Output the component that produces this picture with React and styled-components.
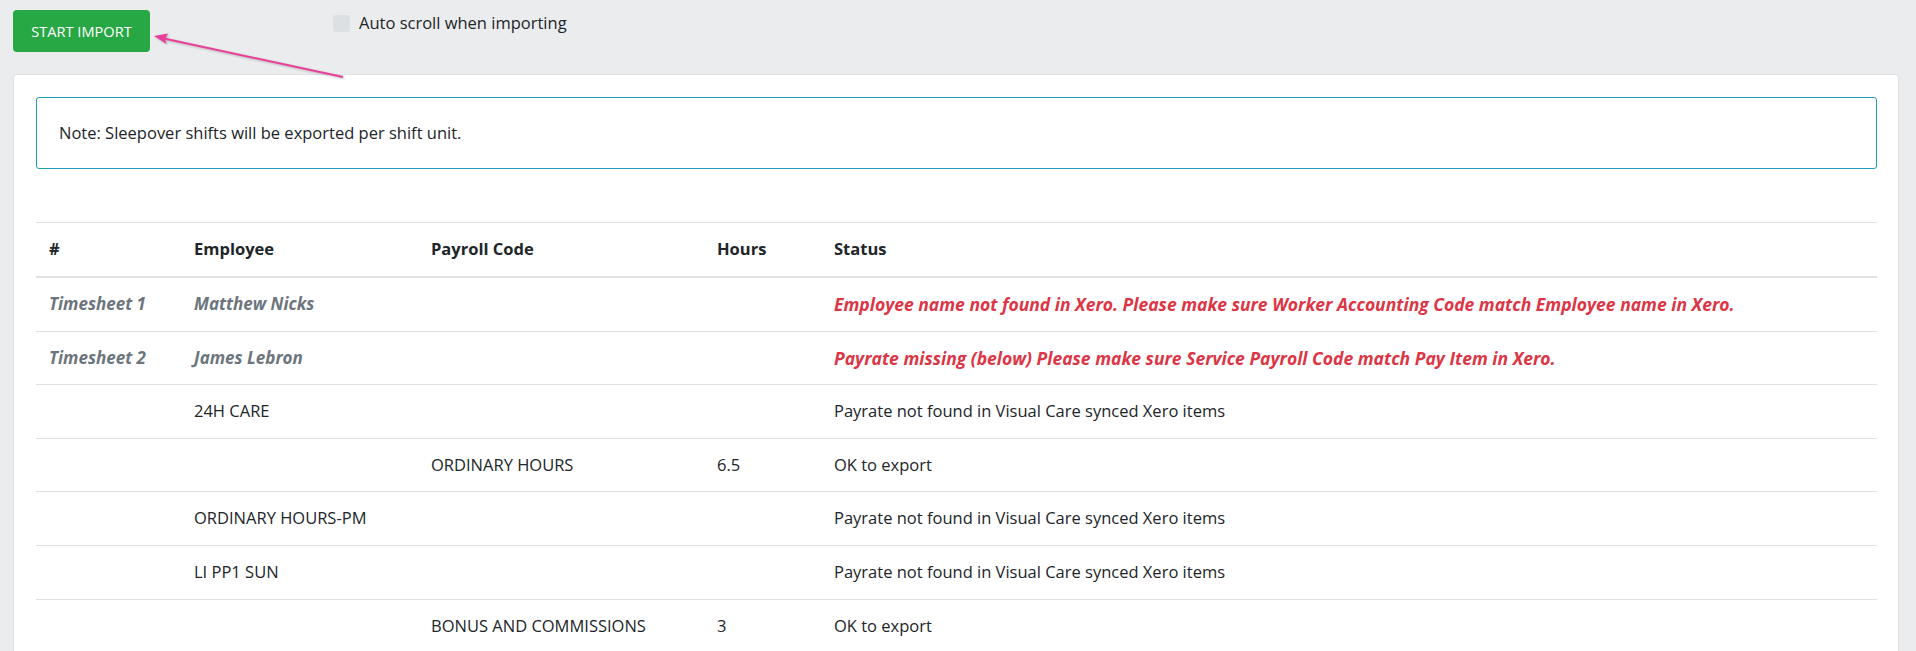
import React from "react";
import styled, { createGlobalStyle } from "styled-components";

const GlobalStyle = createGlobalStyle`
    html, body {
        margin: 0;
        padding: 0;
        background-color: #ebecee;
        font-family: "Open Sans", "Noto Sans", sans-serif;
        color: #212529;
        overflow: hidden;
    }
`;

const Page = styled.div`
    position: relative;
    box-sizing: border-box;
    width: 1916px;
    height: 651px;
    padding: 10px 17px 0 13px;
`;

const Toolbar = styled.div`
    display: flex;
    align-items: flex-start;
    height: 42px;
`;

const ImportButton = styled.button`
    box-sizing: border-box;
    width: 137px;
    height: 42px;
    border: none;
    border-radius: 4px;
    background-color: #28a745;
    color: #ffffff;
    font-family: "Open Sans", sans-serif;
    font-size: 14.6px;
    text-transform: uppercase;
    cursor: pointer;
`;

const CheckLabel = styled.label`
    display: flex;
    align-items: center;
    gap: 9px;
    margin-left: 183px;
    margin-top: 1px;
    font-size: 16.5px;
    line-height: 24px;
    color: #212529;
`;

const CheckBox = styled.span`
    display: inline-block;
    width: 17px;
    height: 17px;
    border-radius: 3px;
    background-color: #dcdfe4;
`;

const Arrow = styled.svg`
    position: absolute;
    left: 0;
    top: 0;
    pointer-events: none;
    overflow: visible;
    filter: drop-shadow(1px 1px 1px rgba(0, 0, 0, 0.25));
`;

const Card = styled.div`
    box-sizing: border-box;
    margin-top: 22px;
    height: 600px;
    background-color: #ffffff;
    border: 1px solid #dfe1e5;
    border-radius: 4px;
    padding: 22px 21px 0 22px;
`;

const Note = styled.div`
    border: 1px solid #1f9db7;
    border-radius: 3px;
    padding: 23px 22px;
    font-size: 16.5px;
    line-height: 24px;
`;

const Table = styled.table`
    width: 100%;
    margin-top: 53px;
    border-collapse: collapse;
    table-layout: fixed;
    font-size: 16.5px;
    line-height: 24px;
`;

const HeadCell = styled.th`
    text-align: left;
    font-weight: 700;
    padding: 14px 12px 15px 13px;
    border-top: 1px solid #dee2e6;
    border-bottom: 2px solid #dee2e6;
`;

const Cell = styled.td`
    padding: 14px 12px 14.6px 13px;
    border-top: 1px solid #dee2e6;
    white-space: nowrap;
    color: ${props => {
        switch (props.tone) {
            case "muted":
                return "#6c757d";
            case "danger":
                return "#dc3545";
            default:
                return "#212529";
        }
    }};
    font-weight: ${props => (props.tone ? 700 : 400)};
    font-style: ${props => (props.tone ? "italic" : "normal")};
    font-size: ${props => (props.tone === "danger" ? "17.5px" : props.tone ? "17px" : "16.5px")};
`;

const rows = [
    { num: "Timesheet 1", employee: "Matthew Nicks", code: "", hours: "",
      status: "Employee name not found in Xero. Please make sure Worker Accounting Code match Employee name in Xero.", error: true },
    { num: "Timesheet 2", employee: "James Lebron", code: "", hours: "",
      status: "Payrate missing (below) Please make sure Service Payroll Code match Pay Item in Xero.", error: true },
    { num: "", employee: "24H CARE", code: "", hours: "", status: "Payrate not found in Visual Care synced Xero items" },
    { num: "", employee: "", code: "ORDINARY HOURS", hours: "6.5", status: "OK to export" },
    { num: "", employee: "ORDINARY HOURS-PM", code: "", hours: "", status: "Payrate not found in Visual Care synced Xero items" },
    { num: "", employee: "LI PP1 SUN", code: "", hours: "", status: "Payrate not found in Visual Care synced Xero items" },
    { num: "", employee: "", code: "BONUS AND COMMISSIONS", hours: "3", status: "OK to export" },
];

function App() {
    return (
        <>
            <GlobalStyle />
            <Page>
                <Toolbar>
                    <ImportButton>Start Import</ImportButton>
                    <CheckLabel>
                        <CheckBox />
                        Auto scroll when importing
                    </CheckLabel>
                </Toolbar>

                <Arrow width="360" height="90" viewBox="0 0 360 90">
                    <line x1="164" y1="38.5" x2="343" y2="77" stroke="#e8409a" strokeWidth="2" />
                    <polygon points="154,36 168,33.5 165,39 166.5,44" fill="#e8409a" />
                </Arrow>

                <Card>
                    <Note>Note: Sleepover shifts will be exported per shift unit.</Note>

                    <Table>
                        <colgroup>
                            <col style={{ width: 145 }} />
                            <col style={{ width: 237 }} />
                            <col style={{ width: 286 }} />
                            <col style={{ width: 117 }} />
                            <col />
                        </colgroup>
                        <thead>
                            <tr>
                                <HeadCell>#</HeadCell>
                                <HeadCell>Employee</HeadCell>
                                <HeadCell>Payroll Code</HeadCell>
                                <HeadCell>Hours</HeadCell>
                                <HeadCell>Status</HeadCell>
                            </tr>
                        </thead>
                        <tbody>
                            {rows.map((row, i) => (
                                <tr key={i}>
                                    <Cell tone={row.error ? "muted" : undefined}>{row.num}</Cell>
                                    <Cell tone={row.error ? "muted" : undefined}>{row.employee}</Cell>
                                    <Cell>{row.code}</Cell>
                                    <Cell>{row.hours}</Cell>
                                    <Cell tone={row.error ? "danger" : undefined}>{row.status}</Cell>
                                </tr>
                            ))}
                        </tbody>
                    </Table>
                </Card>
            </Page>
        </>
    );
}

export default App;
